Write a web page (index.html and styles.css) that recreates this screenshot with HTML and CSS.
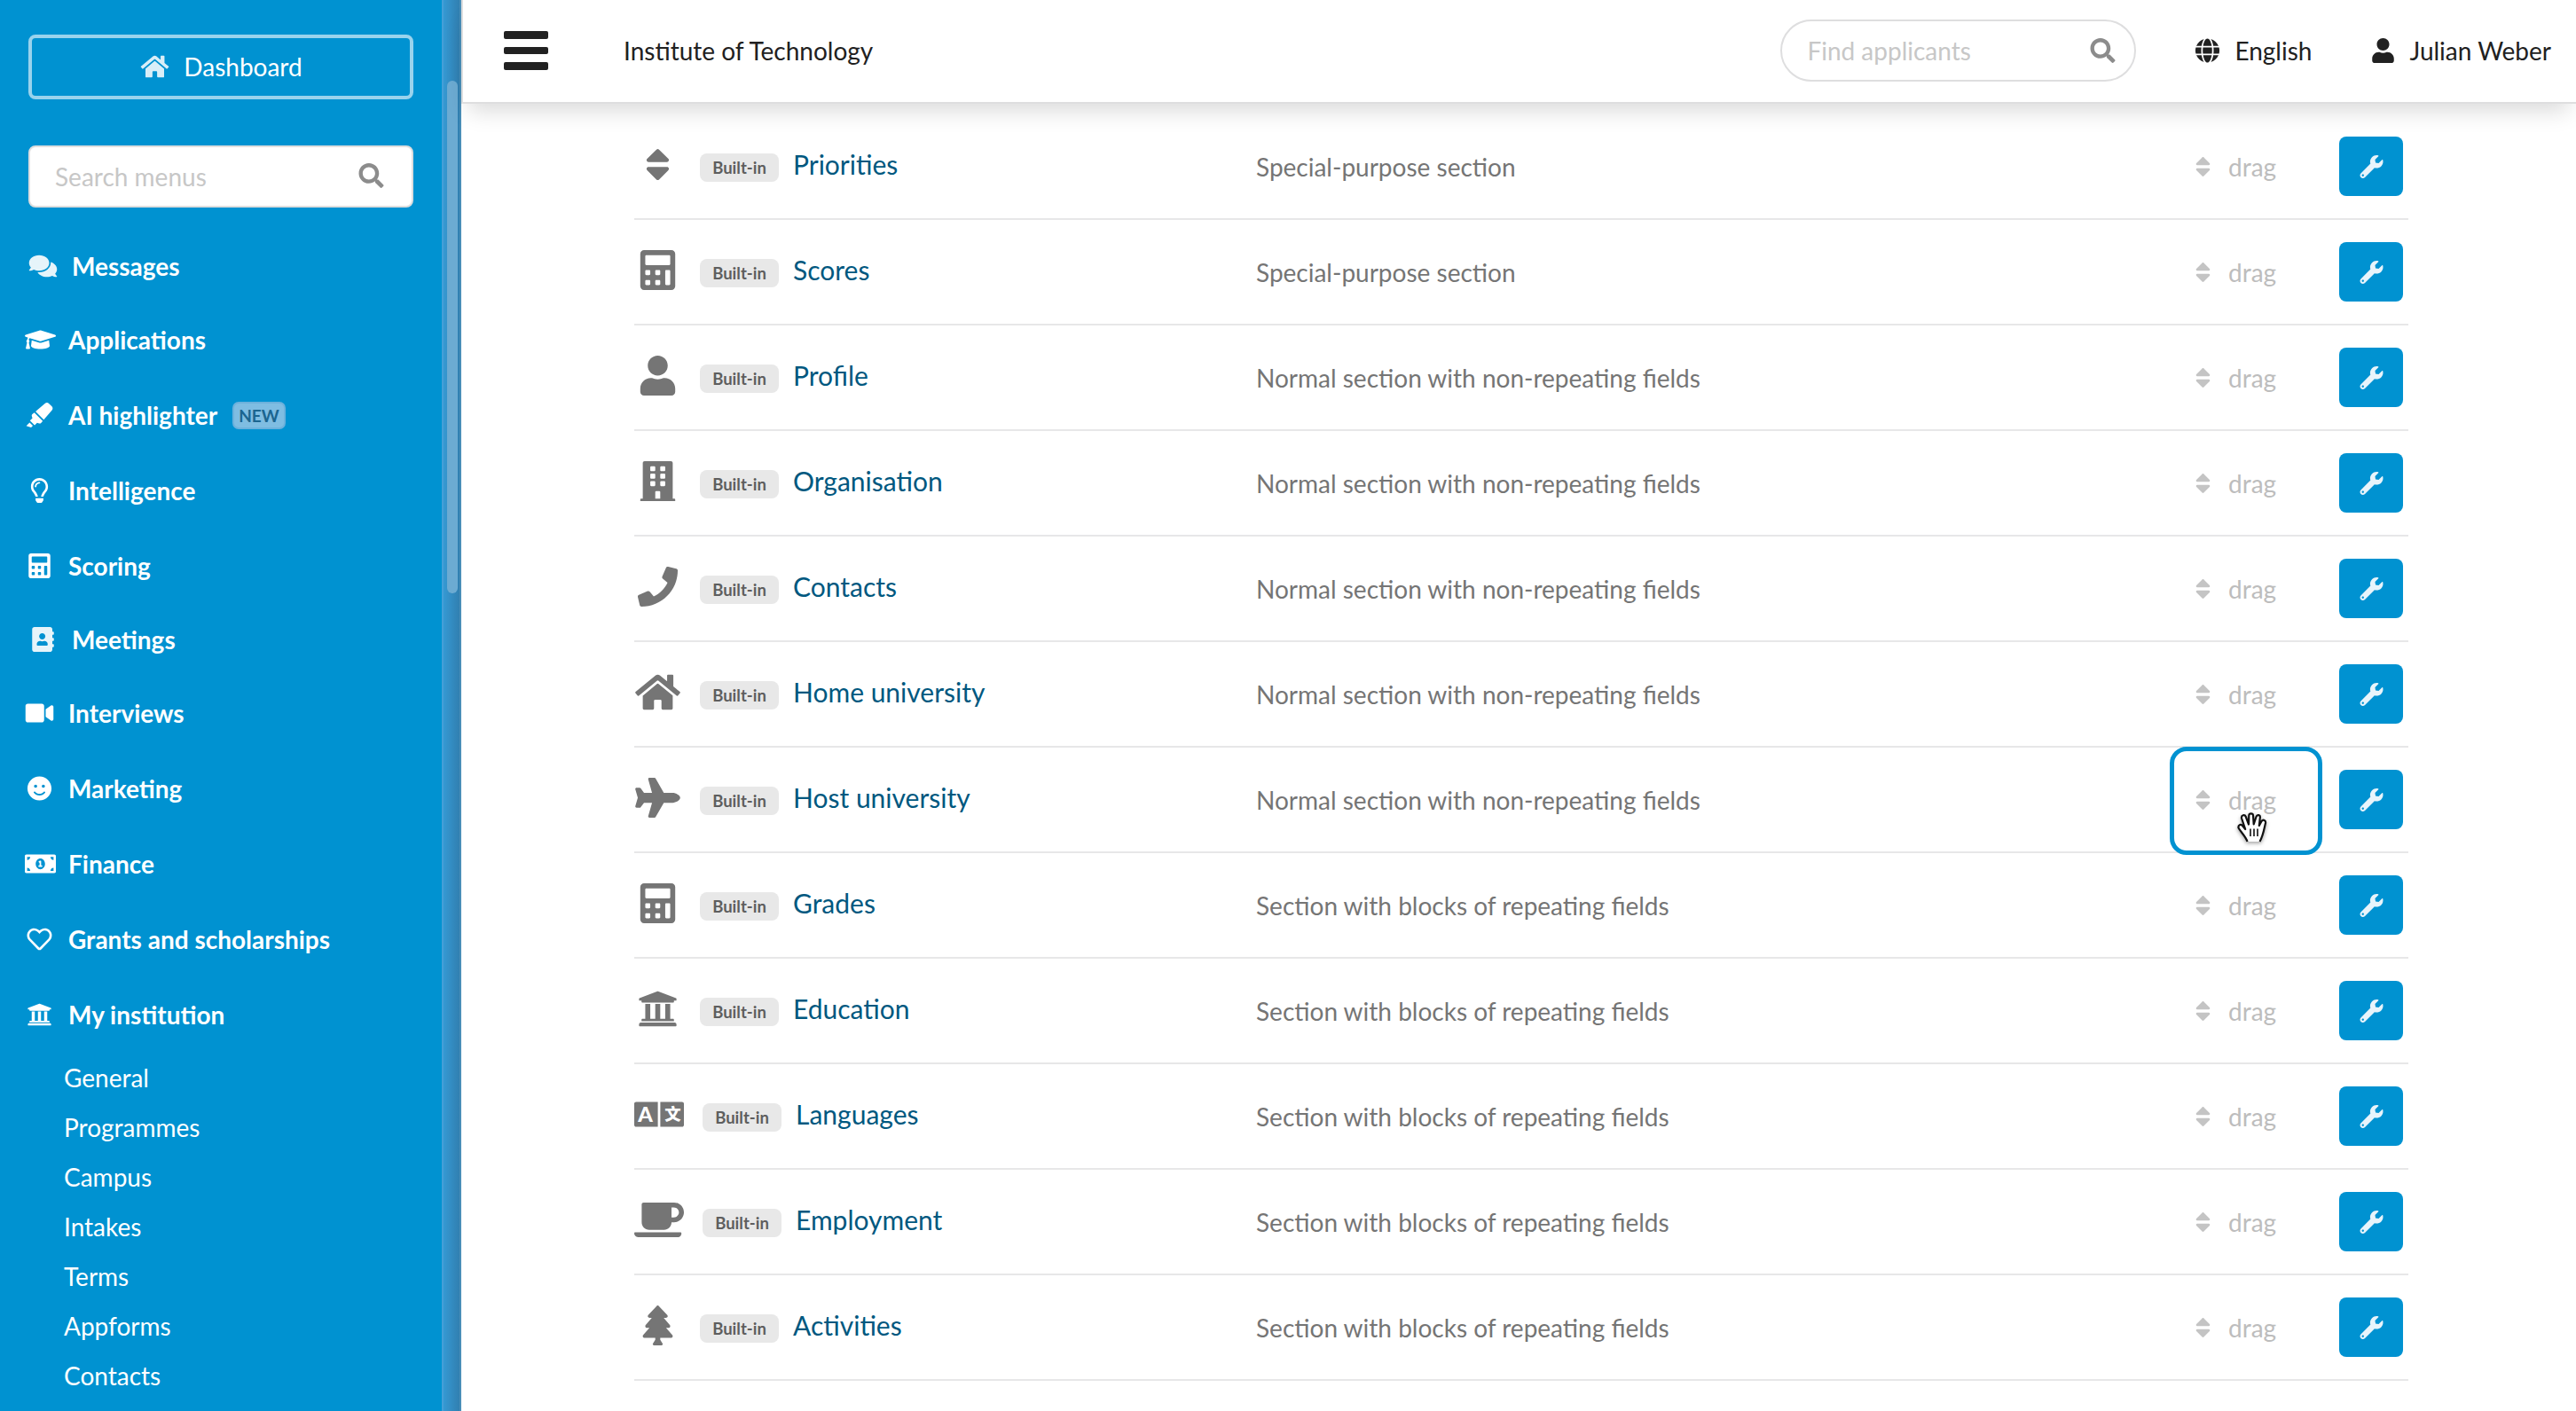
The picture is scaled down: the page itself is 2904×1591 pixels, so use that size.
FILE: index.html
```html
<!DOCTYPE html>
<html lang="en">
<head>
  <meta charset="UTF-8">
  <title>Institute of Technology</title>
  <link rel="stylesheet" href="styles.css">
</head>
<body>

  <!-- icon sprite -->
  <svg class="sprite" width="0" height="0">
    <symbol id="home" viewBox="0 0 576 512"><path d="M280.37 148.26L96 300.11V464a16 16 0 0 0 16 16l112.06-.29a16 16 0 0 0 15.92-16V368a16 16 0 0 1 16-16h64a16 16 0 0 1 16 16v95.64a16 16 0 0 0 16 16.05L464 480a16 16 0 0 0 16-16V300L295.67 148.26a12.19 12.19 0 0 0-15.3 0zM571.6 251.47L488 182.56V44.05a12 12 0 0 0-12-12h-56a12 12 0 0 0-12 12v72.61L318.47 43a48 48 0 0 0-61 0L4.34 251.47a12 12 0 0 0-1.6 16.9l25.5 31A12 12 0 0 0 45.15 301l235.22-193.74a12.19 12.19 0 0 1 15.3 0L530.9 301a12 12 0 0 0 16.9-1.6l25.5-31a12 12 0 0 0-1.7-16.93z"/></symbol>
    <symbol id="search" viewBox="0 0 512 512"><path d="M505 442.7L405.3 343c-4.5-4.5-10.6-7-17-7H372c27.6-35.3 44-79.7 44-128C416 93.1 322.9 0 208 0S0 93.1 0 208s93.1 208 208 208c48.3 0 92.7-16.4 128-44v16.3c0 6.4 2.5 12.5 7 17l99.7 99.7c9.4 9.4 24.6 9.4 33.9 0l28.3-28.3c9.4-9.4 9.4-24.6.1-34zM208 336c-70.7 0-128-57.2-128-128 0-70.7 57.2-128 128-128 70.7 0 128 57.2 128 128 0 70.7-57.2 128-128 128z"/></symbol>
    <symbol id="comments" viewBox="0 0 576 512"><path d="M416 192c0-88.4-93.1-160-208-160S0 103.6 0 192c0 34.3 14.1 65.9 38 92-13.4 30.2-35.5 54.2-35.8 54.5-2.2 2.3-2.8 5.7-1.5 8.7S4.8 352 8 352c36.6 0 66.9-12.3 88.7-25 32.2 15.7 70.3 25 111.3 25 114.9 0 208-71.6 208-160zm122 220c23.9-26 38-57.7 38-92 0-66.9-53.5-124.2-129.3-148.1.9 6.6 1.3 13.3 1.3 20.1 0 105.9-107.7 192-240 192-10.8 0-21.3-.8-31.7-1.9C207.8 439.6 281.8 480 368 480c41 0 79.1-9.2 111.3-25 21.8 12.7 52.1 25 88.7 25 3.2 0 6.1-1.9 7.3-4.8 1.3-2.9.7-6.3-1.5-8.7-.3-.3-22.4-24.2-35.8-54.5z"/></symbol>
    <symbol id="graduation" viewBox="0 0 640 512"><path d="M622.34 153.2L343.4 67.5c-15.2-4.67-31.6-4.67-46.79 0L17.66 153.2c-23.54 7.23-23.54 38.36 0 45.59l48.63 14.94c-10.67 13.19-17.23 29.28-17.88 46.9C38.78 266.15 32 276.11 32 288c0 10.78 5.68 19.85 13.86 25.65L20.33 428.53C18.11 438.52 25.71 448 35.94 448h56.11c10.24 0 17.84-9.48 15.62-19.47L82.14 313.65C90.32 307.85 96 298.78 96 288c0-11.57-6.47-21.25-15.66-26.87.76-15.02 8.44-28.3 20.69-36.72L296.6 284.5c9.06 2.78 26.44 6.25 46.79 0l278.95-85.7c23.55-7.24 23.55-38.36 0-45.6zM352.79 315.09c-28.53 8.76-52.84 3.92-65.59 0l-145.02-44.55L128 384c0 35.35 85.96 64 192 64s192-28.65 192-64l-14.18-113.47-145.03 44.56z"/></symbol>
    <symbol id="highlighter" viewBox="0 0 544 512"><path d="M0 479.98L99.92 512l35.45-35.45-67.04-67.04L0 479.98zm124.61-240.01a36.592 36.592 0 0 0-10.79 38.1l13.05 42.83-50.93 50.94 96.23 96.23 50.86-50.86 42.74 13.08c13.73 4.2 28.65-.01 38.15-10.78l35.55-41.64-173.34-173.34-41.52 35.44zm403.31-160.7l-63.2-63.2c-20.49-20.49-53.38-21.52-75.12-2.35L190.55 183.68l169.77 169.78L530.27 154.4c19.18-21.74 18.15-54.63-2.35-75.13z"/></symbol>
    <symbol id="lightbulb" viewBox="0 0 352 512"><path d="M176 80c-52.94 0-96 43.06-96 96 0 8.84 7.16 16 16 16s16-7.16 16-16c0-35.3 28.72-64 64-64 8.84 0 16-7.16 16-16s-7.16-16-16-16zM96.06 459.17c0 3.15.93 6.22 2.68 8.84l24.51 36.84c2.97 4.46 7.97 7.14 13.32 7.14h78.85c5.36 0 10.36-2.68 13.32-7.14l24.51-36.84c1.74-2.62 2.67-5.7 2.68-8.84l.05-43.18H96.02l.04 43.18zM176 0C73.72 0 0 82.97 0 176c0 44.37 16.45 84.85 43.56 115.78 16.64 18.99 42.74 58.8 52.42 92.16v.06h48v-.12c-.01-4.77-.72-9.51-2.15-14.07-5.59-17.81-22.82-64.77-62.17-109.67-20.54-23.43-31.52-53.15-31.61-84.14-.2-73.64 59.67-128 127.95-128 70.58 0 128 57.42 128 128 0 30.97-11.24 60.85-31.65 84.14-39.11 44.61-56.42 91.47-62.1 109.46a47.507 47.507 0 0 0-2.22 14.3v.1h48v-.05c9.68-33.37 35.78-73.18 52.42-92.16C335.55 260.85 352 220.37 352 176 352 78.8 273.2 0 176 0z"/></symbol>
    <symbol id="calculator" viewBox="0 0 448 512"><path d="M400 0H48C22.4 0 0 22.4 0 48v416c0 25.6 22.4 48 48 48h352c25.6 0 48-22.4 48-48V48c0-25.6-22.4-48-48-48zM128 435.2c0 6.4-6.4 12.8-12.8 12.8H76.8c-6.4 0-12.8-6.4-12.8-12.8v-38.4c0-6.4 6.4-12.8 12.8-12.8h38.4c6.4 0 12.8 6.4 12.8 12.8v38.4zm0-128c0 6.4-6.4 12.8-12.8 12.8H76.8c-6.4 0-12.8-6.4-12.8-12.8v-38.4c0-6.4 6.4-12.8 12.8-12.8h38.4c6.4 0 12.8 6.4 12.8 12.8v38.4zm128 128c0 6.4-6.4 12.8-12.8 12.8h-38.4c-6.4 0-12.8-6.4-12.8-12.8v-38.4c0-6.4 6.4-12.8 12.8-12.8h38.4c6.4 0 12.8 6.4 12.8 12.8v38.4zm0-128c0 6.4-6.4 12.8-12.8 12.8h-38.4c-6.4 0-12.8-6.4-12.8-12.8v-38.4c0-6.4 6.4-12.8 12.8-12.8h38.4c6.4 0 12.8 6.4 12.8 12.8v38.4zm128 128c0 6.4-6.4 12.8-12.8 12.8h-38.4c-6.4 0-12.8-6.4-12.8-12.8V268.8c0-6.4 6.4-12.8 12.8-12.8h38.4c6.4 0 12.8 6.4 12.8 12.8v166.4zm0-256c0 6.4-6.4 12.8-12.8 12.8H76.8c-6.4 0-12.8-6.4-12.8-12.8V76.8C64 70.4 70.4 64 76.8 64h294.4c6.4 0 12.8 6.4 12.8 12.8v102.4z"/></symbol>
    <symbol id="address-book" viewBox="0 0 448 512"><path d="M436 160c6.6 0 12-5.4 12-12v-40c0-6.6-5.4-12-12-12h-20V48c0-26.5-21.5-48-48-48H48C21.5 0 0 21.5 0 48v416c0 26.5 21.5 48 48 48h320c26.5 0 48-21.5 48-48v-48h20c6.6 0 12-5.4 12-12v-40c0-6.6-5.4-12-12-12h-20v-64h20c6.6 0 12-5.4 12-12v-40c0-6.6-5.4-12-12-12h-20v-64h20zm-228-32c35.3 0 64 28.7 64 64s-28.7 64-64 64-64-28.7-64-64 28.7-64 64-64zm112 236.8c0 10.6-10 19.2-22.4 19.2H118.4C106 384 96 375.4 96 364.8v-19.2c0-31.8 30.1-57.6 67.2-57.6h5c12.3 5.1 25.7 8 39.8 8s27.6-2.9 39.8-8h5c37.1 0 67.2 25.8 67.2 57.6v19.2z"/></symbol>
    <symbol id="video" viewBox="0 0 576 512"><path d="M336.2 64H47.8C21.4 64 0 85.4 0 111.8v288.4C0 426.6 21.4 448 47.8 448h288.4c26.4 0 47.8-21.4 47.8-47.8V111.8c0-26.4-21.4-47.8-47.8-47.8zm189.4 37.7L416 177.3v157.4l109.6 75.5c21.2 14.6 50.4-.3 50.4-25.8V127.5c0-25.4-29.1-40.4-50.4-25.8z"/></symbol>
    <symbol id="smile" viewBox="0 0 496 512"><path d="M248 8C111 8 0 119 0 256s111 248 248 248 248-111 248-248S385 8 248 8zm80 168c17.7 0 32 14.3 32 32s-14.3 32-32 32-32-14.3-32-32 14.3-32 32-32zm-160 0c17.7 0 32 14.3 32 32s-14.3 32-32 32-32-14.3-32-32 14.3-32 32-32zm194.8 170.2C334.3 380.4 292.5 400 248 400s-86.3-19.6-114.8-53.8c-13.6-16.3 11-36.7 24.6-20.5 22.4 26.9 55.2 42.2 90.2 42.2s67.8-15.4 90.2-42.2c13.4-16.2 38.1 4.2 24.6 20.5z"/></symbol>
    <symbol id="money" viewBox="0 0 640 512"><path d="M352 288h-16v-88c0-4.42-3.58-8-8-8h-13.58c-4.74 0-9.37 1.4-13.31 4.03l-15.33 10.22a7.994 7.994 0 0 0-2.22 11.09l8.88 13.31a7.994 7.994 0 0 0 11.09 2.22l.47-.31V288h-16c-4.42 0-8 3.58-8 8v16c0 4.42 3.58 8 8 8h64c4.42 0 8-3.58 8-8v-16c0-4.42-3.58-8-8-8zM608 64H32C14.33 64 0 78.33 0 96v320c0 17.67 14.33 32 32 32h576c17.67 0 32-14.33 32-32V96c0-17.67-14.33-32-32-32zM48 400v-64c35.35 0 64 28.65 64 64H48zm0-224v-64h64c0 35.35-28.65 64-64 64zm272 192c-53.02 0-96-50.15-96-112 0-61.86 42.98-112 96-112s96 50.14 96 112c0 61.87-43 112-96 112zm272 32h-64c0-35.35 28.65-64 64-64v64zm0-224c-35.35 0-64-28.65-64-64h64v64z"/></symbol>
    <symbol id="heart" viewBox="0 0 512 512"><path d="M458.4 64.3C400.6 15.7 311.3 23 256 79.3 200.7 23 111.4 15.6 53.6 64.3-21.6 127.6-10.6 230.8 43 285.5l175.4 178.7c10 10.2 23.4 15.9 37.6 15.9 14.3 0 27.6-5.6 37.6-15.8L469 285.6c53.5-54.7 64.7-157.9-10.6-221.3zm-23.6 187.5L259.4 430.5c-2.4 2.4-4.4 2.4-6.8 0L77.2 251.8c-36.5-37.2-43.9-107.6 7.3-150.7 38.9-32.7 98.9-27.8 136.5 10.5l35 35.7 35-35.7c37.8-38.5 97.8-43.2 136.5-10.6 51.1 43.1 43.5 113.9 7.3 150.8z"/></symbol>
    <symbol id="university" viewBox="0 0 512 512"><path d="M496 128v16a8 8 0 0 1-8 8h-24v12c0 6.627-5.373 12-12 12H60c-6.627 0-12-5.373-12-12v-12H24a8 8 0 0 1-8-8v-16a8 8 0 0 1 4.941-7.392l232-88a7.996 7.996 0 0 1 6.118 0l232 88A8 8 0 0 1 496 128zm-24 304H40c-13.255 0-24 10.745-24 24v16a8 8 0 0 0 8 8h464a8 8 0 0 0 8-8v-16c0-13.255-10.745-24-24-24zM96 192v192H60c-6.627 0-12 5.373-12 12v20h416v-20c0-6.627-5.373-12-12-12h-36V192h-64v192h-64V192h-64v192h-64V192H96z"/></symbol>
    <symbol id="globe" viewBox="0 0 496 512"><path d="M336.5 160C322 70.7 287.8 8 248 8s-74 62.7-88.5 152h177zM152 256c0 22.2 1.2 43.5 3.3 64h185.3c2.1-20.5 3.3-41.8 3.3-64s-1.2-43.5-3.3-64H155.3c-2.1 20.5-3.3 41.8-3.3 64zm324.7-96c-28.6-67.9-86.5-120.4-158-141.6 24.4 33.8 41.2 84.7 50 141.6h108zM177.2 18.4C105.8 39.6 47.8 92.1 19.3 160h108c8.7-56.9 25.5-107.8 49.9-141.6zM487.4 192H372.7c2.1 21 3.3 42.5 3.3 64s-1.2 43-3.3 64h114.6c5.5-20.5 8.6-41.8 8.6-64s-3.1-43.5-8.5-64zM120 256c0-21.5 1.2-43 3.3-64H8.6C3.2 212.5 0 233.8 0 256s3.2 43.5 8.6 64h114.6c-2-21-3.2-42.5-3.2-64zm39.5 96c14.5 89.3 48.7 152 88.5 152s74-62.7 88.5-152h-177zm159.3 141.6c71.4-21.2 129.4-73.7 158-141.6h-108c-8.8 56.9-25.6 107.8-50 141.6zM19.3 352c28.6 67.9 86.5 120.4 158 141.6-24.4-33.8-41.2-84.7-50-141.6h-108z"/></symbol>
    <symbol id="user" viewBox="0 0 448 512"><path d="M224 256c70.7 0 128-57.3 128-128S294.7 0 224 0 96 57.3 96 128s57.3 128 128 128zm89.6 32h-16.7c-22.2 10.2-46.9 16-72.9 16s-50.6-5.8-72.9-16h-16.7C60.2 288 0 348.2 0 422.4V464c0 26.5 21.5 48 48 48h352c26.5 0 48-21.5 48-48v-41.6c0-74.2-60.2-134.4-134.4-134.4z"/></symbol>
    <symbol id="sort" viewBox="0 0 320 512"><path d="M41 288h238c21.4 0 32.1 25.9 17 41L177 448c-9.4 9.4-24.6 9.4-33.9 0L24 329c-15.1-15.1-4.4-41 17-41zm255-105L177 64c-9.4-9.4-24.6-9.4-33.9 0L24 183c-15.1 15.1-4.4 41 17 41h238c21.4 0 32.1-25.9 17-41z"/></symbol>
    <symbol id="building" viewBox="0 0 448 512"><path fill-rule="evenodd" d="M436 480h-20V24c0-13.3-10.7-24-24-24H56C42.7 0 32 10.7 32 24v456H12c-6.6 0-12 5.4-12 12v20h448v-20c0-6.6-5.4-12-12-12zM140 64h40a12 12 0 0 1 12 12v40a12 12 0 0 1-12 12h-40a12 12 0 0 1-12-12V76a12 12 0 0 1 12-12zm128 0h40a12 12 0 0 1 12 12v40a12 12 0 0 1-12 12h-40a12 12 0 0 1-12-12V76a12 12 0 0 1 12-12zM140 160h40a12 12 0 0 1 12 12v40a12 12 0 0 1-12 12h-40a12 12 0 0 1-12-12v-40a12 12 0 0 1 12-12zm128 0h40a12 12 0 0 1 12 12v40a12 12 0 0 1-12 12h-40a12 12 0 0 1-12-12v-40a12 12 0 0 1 12-12zM140 256h40a12 12 0 0 1 12 12v40a12 12 0 0 1-12 12h-40a12 12 0 0 1-12-12v-40a12 12 0 0 1 12-12zm128 0h40a12 12 0 0 1 12 12v40a12 12 0 0 1-12 12h-40a12 12 0 0 1-12-12v-40a12 12 0 0 1 12-12zM204 384h40a12 12 0 0 1 12 12v84h-64v-84a12 12 0 0 1 12-12z"/></symbol>
    <symbol id="phone" viewBox="0 0 512 512"><path d="M493.4 24.6l-104-24c-11.3-2.6-22.9 3.3-27.5 13.9l-48 112c-4.2 9.8-1.4 21.3 6.9 28l60.6 49.6c-36 76.7-98.9 140.5-177.2 177.2l-49.6-60.6c-6.8-8.3-18.2-11.1-28-6.9l-112 48C3.9 366.5-2 378.1.6 389.4l24 104C27.1 504.2 36.7 512 48 512c256.1 0 464-207.5 464-464 0-11.2-7.7-20.9-18.6-23.4z"/></symbol>
    <symbol id="plane" viewBox="0 0 576 512"><path d="M480 192H365.71L260.61 8.06A16.014 16.014 0 0 0 246.71 0h-65.5c-10.63 0-18.3 10.17-15.38 20.39L214.86 192H112l-43.2-57.6c-3.02-4.03-7.77-6.4-12.8-6.4H16.01C5.6 128-2.04 137.78.49 147.88L32 256 .49 364.12C-2.04 374.22 5.6 384 16.01 384H56c5.04 0 9.78-2.37 12.8-6.4L112 320h102.86l-49.03 171.6c-2.92 10.22 4.75 20.4 15.38 20.4h65.5c5.74 0 11.04-3.08 13.89-8.06L365.71 320H480c35.35 0 96-28.65 96-64s-60.65-64-96-64z"/></symbol>
    <symbol id="language" viewBox="0 0 640 512"><path d="M24 96h280v320H24c-13.3 0-24-10.7-24-24V120c0-13.3 10.7-24 24-24zM336 96h280c13.3 0 24 10.7 24 24v272c0 13.3-10.7 24-24 24H336z"/><text class="lang-a" x="144" y="350">A</text><text class="lang-b" x="496" y="334">文</text></symbol>
    <symbol id="coffee" viewBox="0 0 640 512"><path d="M192 384h192c53 0 96-43 96-96h32c70.6 0 128-57.4 128-128S582.6 32 512 32H120c-13.3 0-24 10.7-24 24v232c0 53 43 96 96 96zM512 96c35.3 0 64 28.7 64 64s-28.7 64-64 64h-32V96h32zm47.7 384H48.3c-47.6 0-61-64-36-64h583.3c25 0 11.8 64-35.9 64z"/></symbol>
    <symbol id="tree" viewBox="0 0 384 512"><path d="M378.31 378.49L298.42 288h30.63c9.01 0 16.98-5 20.78-13.06 3.8-8.04 2.55-17.26-3.28-24.05L268.42 160h28.89c9.1 0 17.3-5.35 20.86-13.61 3.52-8.13 1.86-17.59-4.24-24.08L203.66 4.83c-6.03-6.45-17.28-6.45-23.32 0L70.06 122.31c-6.1 6.49-7.75 15.95-4.24 24.08C69.38 154.65 77.59 160 86.69 160h28.89l-78.14 90.91c-5.81 6.78-7.06 15.99-3.27 24.04C37.97 283 45.93 288 54.95 288h30.63L5.69 378.49c-6 6.79-7.36 16.09-3.56 24.26 3.75 8.05 12 13.25 21.01 13.25H160v24.45l-30.29 48.4c-5.32 10.64 2.42 23.16 14.31 23.16h95.96c11.89 0 19.63-12.52 14.31-23.16L224 440.45V416h136.86c9.01 0 17.26-5.2 21.01-13.25 3.8-8.17 2.44-17.47-3.56-24.26z"/></symbol>
    <symbol id="wrench" viewBox="0 0 512 512"><path d="M507.73 109.1c-2.24-9.03-13.54-12.09-20.12-5.51l-74.36 74.36-67.88-11.31-11.31-67.88 74.36-74.36c6.62-6.62 3.43-17.9-5.66-20.16-47.38-11.74-99.55.91-136.58 37.93-39.64 39.64-50.55 97.1-34.05 147.2L18.74 402.76c-24.99 24.99-24.99 65.51 0 90.5 24.99 24.99 65.51 24.99 90.5 0l213.21-213.21c50.12 16.71 107.47 5.68 147.37-34.22 37.07-37.07 49.7-89.32 37.91-136.73zM64 472c-13.25 0-24-10.75-24-24 0-13.26 10.75-24 24-24s24 10.74 24 24c0 13.25-10.75 24-24 24z"/></symbol>
  </svg>

  <div class="app">

    <!-- sidebar -->
    <aside class="sidebar">
      <div class="sidebar-content">
        <a class="dashboard-btn"><svg class="icon"><use href="#home"/></svg>Dashboard</a>
        <div class="menu-search">
          <span>Search menus</span>
          <svg class="icon"><use href="#search"/></svg>
        </div>

        <nav class="menu">
          <a class="menu-item indented"><svg class="icon"><use href="#comments"/></svg>Messages</a>
          <a class="menu-item"><svg class="icon wide"><use href="#graduation"/></svg>Applications</a>
          <a class="menu-item"><svg class="icon"><use href="#highlighter"/></svg>AI highlighter <span class="new-label">NEW</span></a>
          <a class="menu-item"><svg class="icon"><use href="#lightbulb"/></svg>Intelligence</a>
          <a class="menu-item"><svg class="icon"><use href="#calculator"/></svg>Scoring</a>
          <a class="menu-item indented"><svg class="icon"><use href="#address-book"/></svg>Meetings</a>
          <a class="menu-item"><svg class="icon"><use href="#video"/></svg>Interviews</a>
          <a class="menu-item"><svg class="icon"><use href="#smile"/></svg>Marketing</a>
          <a class="menu-item"><svg class="icon wide"><use href="#money"/></svg>Finance</a>
          <a class="menu-item"><svg class="icon"><use href="#heart"/></svg>Grants and scholarships</a>
          <a class="menu-item"><svg class="icon"><use href="#university"/></svg>My institution</a>
          <div class="submenu">
            <a>General</a>
            <a>Programmes</a>
            <a>Campus</a>
            <a>Intakes</a>
            <a>Terms</a>
            <a>Appforms</a>
            <a>Contacts</a>
          </div>
        </nav>
      </div>
      <div class="scrollbar"><div class="thumb"></div></div>
    </aside>

    <div class="main">
      <!-- top bar -->
      <header class="topbar">
        <div class="burger"><span></span><span></span><span></span></div>
        <div class="site-name">Institute of Technology</div>
        <div class="applicant-search">
          <span>Find applicants</span>
          <svg class="icon"><use href="#search"/></svg>
        </div>
        <a class="language"><svg class="icon"><use href="#globe"/></svg>English</a>
        <a class="account"><svg class="icon"><use href="#user"/></svg>Julian Weber</a>
      </header>

      <!-- sections list -->
      <div class="sections">
        <div class="row">
          <div class="name"><svg class="icon"><use href="#sort"/></svg><span class="label">Built-in</span><a>Priorities</a></div>
          <div class="desc">Special-purpose section</div>
          <div class="drag"><svg class="icon"><use href="#sort"/></svg>drag</div>
          <button><svg class="icon"><use href="#wrench"/></svg></button>
        </div>
        <div class="row">
          <div class="name"><svg class="icon"><use href="#calculator"/></svg><span class="label">Built-in</span><a>Scores</a></div>
          <div class="desc">Special-purpose section</div>
          <div class="drag"><svg class="icon"><use href="#sort"/></svg>drag</div>
          <button><svg class="icon"><use href="#wrench"/></svg></button>
        </div>
        <div class="row">
          <div class="name"><svg class="icon"><use href="#user"/></svg><span class="label">Built-in</span><a>Profile</a></div>
          <div class="desc">Normal section with non-repeating fields</div>
          <div class="drag"><svg class="icon"><use href="#sort"/></svg>drag</div>
          <button><svg class="icon"><use href="#wrench"/></svg></button>
        </div>
        <div class="row">
          <div class="name"><svg class="icon"><use href="#building"/></svg><span class="label">Built-in</span><a>Organisation</a></div>
          <div class="desc">Normal section with non-repeating fields</div>
          <div class="drag"><svg class="icon"><use href="#sort"/></svg>drag</div>
          <button><svg class="icon"><use href="#wrench"/></svg></button>
        </div>
        <div class="row">
          <div class="name"><svg class="icon"><use href="#phone"/></svg><span class="label">Built-in</span><a>Contacts</a></div>
          <div class="desc">Normal section with non-repeating fields</div>
          <div class="drag"><svg class="icon"><use href="#sort"/></svg>drag</div>
          <button><svg class="icon"><use href="#wrench"/></svg></button>
        </div>
        <div class="row">
          <div class="name"><svg class="icon"><use href="#home"/></svg><span class="label">Built-in</span><a>Home university</a></div>
          <div class="desc">Normal section with non-repeating fields</div>
          <div class="drag"><svg class="icon"><use href="#sort"/></svg>drag</div>
          <button><svg class="icon"><use href="#wrench"/></svg></button>
        </div>
        <div class="row">
          <div class="name"><svg class="icon"><use href="#plane"/></svg><span class="label">Built-in</span><a>Host university</a></div>
          <div class="desc">Normal section with non-repeating fields</div>
          <div class="drag active">
            <svg class="icon"><use href="#sort"/></svg>drag
            <svg class="cursor" viewBox="0 0 34 35"><path d="M11.5 33C10 27.500 4 22 1.500 17.500 1 14 4 13 6 15l3.200 4L5 6.500C4.500 3 8.500 2 9.800 5L13 13.500 13.300 3.500C13.500.7 17.800.7 18 3.500l.7 10L21.500 5c1-3.200 5-2.200 4.300 1L24.800 15l2.700-5c2-2.500 5-1 4.500 2C30.500 18 29.500 26 25.500 33"/><path class="lines" d="M15 18.500v8.500M19 18.500v8.500M23 18.500v8.500"/></svg>
          </div>
          <button><svg class="icon"><use href="#wrench"/></svg></button>
        </div>
        <div class="row">
          <div class="name"><svg class="icon"><use href="#calculator"/></svg><span class="label">Built-in</span><a>Grades</a></div>
          <div class="desc">Section with blocks of repeating fields</div>
          <div class="drag"><svg class="icon"><use href="#sort"/></svg>drag</div>
          <button><svg class="icon"><use href="#wrench"/></svg></button>
        </div>
        <div class="row">
          <div class="name"><svg class="icon"><use href="#university"/></svg><span class="label">Built-in</span><a>Education</a></div>
          <div class="desc">Section with blocks of repeating fields</div>
          <div class="drag"><svg class="icon"><use href="#sort"/></svg>drag</div>
          <button><svg class="icon"><use href="#wrench"/></svg></button>
        </div>
        <div class="row">
          <div class="name"><svg class="icon wide"><use href="#language"/></svg><span class="label">Built-in</span><a>Languages</a></div>
          <div class="desc">Section with blocks of repeating fields</div>
          <div class="drag"><svg class="icon"><use href="#sort"/></svg>drag</div>
          <button><svg class="icon"><use href="#wrench"/></svg></button>
        </div>
        <div class="row">
          <div class="name"><svg class="icon wide"><use href="#coffee"/></svg><span class="label">Built-in</span><a>Employment</a></div>
          <div class="desc">Section with blocks of repeating fields</div>
          <div class="drag"><svg class="icon"><use href="#sort"/></svg>drag</div>
          <button><svg class="icon"><use href="#wrench"/></svg></button>
        </div>
        <div class="row">
          <div class="name"><svg class="icon"><use href="#tree"/></svg><span class="label">Built-in</span><a>Activities</a></div>
          <div class="desc">Section with blocks of repeating fields</div>
          <div class="drag"><svg class="icon"><use href="#sort"/></svg>drag</div>
          <button><svg class="icon"><use href="#wrench"/></svg></button>
        </div>
      </div>
    </div>
  </div>

</body>
</html>
```
FILE: styles.css
```css
* {
  box-sizing: border-box;
}

body {
  margin: 0;
  font-family: Lato, "Noto Sans CJK SC", sans-serif;
  font-size: 28px;
  color: #212121;
  background: #fff;
  overflow: hidden;
}

.sprite {
  display: none;
}

.icon {
  display: block;
  flex: none;
  width: 33px;
  height: 28px;
  fill: currentColor;
}

.app {
  display: flex;
  height: 1591px;
}

/* sidebar */
.sidebar {
  display: flex;
  flex: none;
  width: 520px;
  background: #0092d1;
  color: #fff;
  overflow: hidden;
}

.sidebar-content {
  width: 498px;
  padding-top: 39px;
}

.dashboard-btn {
  display: flex;
  align-items: center;
  justify-content: center;
  height: 73px;
  margin: 0 32px 52px;
  padding: 0 0 2px 1px;
  border: 4px solid rgba(255, 255, 255, 0.6);
  border-radius: 8px;
}

.dashboard-btn .icon {
  margin-right: 16px;
  opacity: 0.85;
}

.menu-search {
  display: flex;
  align-items: center;
  justify-content: space-between;
  height: 70px;
  margin: 0 32px 26px;
  padding: 0 29px 0 28px;
  border: 2px solid #dededf;
  border-radius: 8px;
  background: #fff;
  color: #c7c7c7;
}

.menu-search .icon,
.applicant-search .icon {
  color: #8c8c8c;
}

.menu-search .icon {
  margin-bottom: 2px;
}

.menu-item {
  display: flex;
  align-items: center;
  height: 85px;
  padding: 0 0 2px 28px;
  font-weight: 700;
}

.menu-item .icon {
  margin: 1px 16px 0 0;
}

.menu-item .icon.wide {
  width: 35px;
  margin-right: 14px;
}

.menu-item.indented {
  height: 81px;
  padding-left: 32px;
}

.menu-item.indented .icon {
  opacity: 0.9;
}

.new-label {
  margin: 1px 0 0 17px;
  padding: 0 5px;
  border: 2px solid #6cb1dc;
  border-radius: 7px;
  background: #7fbde2;
  color: #1b6590;
  font-size: 19px;
  line-height: 27px;
}

.submenu a {
  display: block;
  height: 56px;
  padding-left: 72px;
  line-height: 56px;
}

.scrollbar {
  width: 22px;
  padding: 91px 4px 0 4px;
  border-left: 2px solid #459fd7;
  border-right: 2px solid #498eb8;
  background: linear-gradient(to right, #3599d3, #317fb0);
}

.thumb {
  width: 12px;
  height: 578px;
  border-radius: 6px;
  background: #6cabd2;
}

/* top bar */
.main {
  flex: 1;
}

.topbar {
  position: relative;
  display: flex;
  align-items: center;
  height: 117px;
  padding: 0 28px 1px 46px;
  border-left: 2px solid #dededf;
  border-bottom: 2px solid #dededf;
  background: #fff;
  box-shadow: 0 16px 24px -8px rgba(0, 0, 0, 0.15);
}

.burger {
  display: flex;
  flex-direction: column;
  gap: 9px;
  width: 50px;
  margin-right: 85px;
}

.burger span {
  height: 8.5px;
  border-radius: 2px;
  background: #212121;
}

.site-name {
  padding-bottom: 1px;
}

.applicant-search {
  display: flex;
  align-items: center;
  justify-content: space-between;
  width: 401px;
  height: 70px;
  margin-left: auto;
  margin-right: 64px;
  padding: 0 19px 1px 28px;
  border: 2px solid #dededf;
  border-radius: 35px;
  color: #c7c7c7;
}

.language,
.account {
  display: flex;
  align-items: center;
  padding-bottom: 1px;
}

.language {
  margin-right: 64px;
}

.language .icon {
  margin-right: 14px;
}

.account .icon {
  margin-right: 13px;
}

/* sections list */
.sections {
  width: 2000px;
  margin: 12px 0 0 195px;
}

.row {
  display: grid;
  grid-template-columns: 701px 1fr 172px 91px;
  align-items: center;
  height: 119px;
  padding-right: 6px;
  border-bottom: 2px solid #e7e7e8;
}

.name {
  display: flex;
  align-items: center;
  padding-bottom: 5px;
  font-size: 30px;
}

.name .icon {
  width: 53px;
  height: 45px;
  margin-right: 21px;
  color: #757575;
}

.name .icon.wide {
  width: 56px;
}

.name a {
  color: #00587f;
}

.label {
  width: 89px;
  height: 32px;
  margin: 8px 16px 0 0;
  border-radius: 8px;
  background: #e8e8e8;
  color: #5e5e5e;
  font-size: 18.5px;
  font-weight: 700;
  line-height: 32px;
  text-align: center;
}

.lang-a,
.lang-b {
  fill: #fff;
  text-anchor: middle;
  font-weight: 900;
  font-size: 270px;
}

.lang-b {
  font-family: "Noto Sans CJK SC", sans-serif;
  font-size: 210px;
}

.desc {
  color: #757575;
}

.drag {
  position: relative;
  display: flex;
  align-items: center;
  align-self: stretch;
  padding-left: 21px;
  color: #bdbdbd;
}

.drag .icon {
  margin-right: 12px;
  color: #c4c4c4;
}

/* row being dragged */
.drag.active::before {
  content: "";
  position: absolute;
  inset: -1px 0 -4px;
  border: 5px solid #0092d1;
  border-radius: 19px;
}

.cursor {
  position: absolute;
  top: 73px;
  left: 76px;
  width: 34px;
  height: 35px;
  fill: #fff;
  stroke: #111;
  stroke-width: 2.2;
  stroke-linejoin: round;
  filter: drop-shadow(0 2px 2px rgba(0, 0, 0, 0.35));
}

.cursor .lines {
  stroke-width: 1.6;
}

.row button {
  display: flex;
  align-items: center;
  justify-content: center;
  width: 72px;
  height: 67px;
  margin-left: 19px;
  padding: 0;
  border: none;
  border-radius: 8px;
  background: #0092d1;
  color: #e8f4fb;
}

.row button .icon {
  height: 26px;
}
```
